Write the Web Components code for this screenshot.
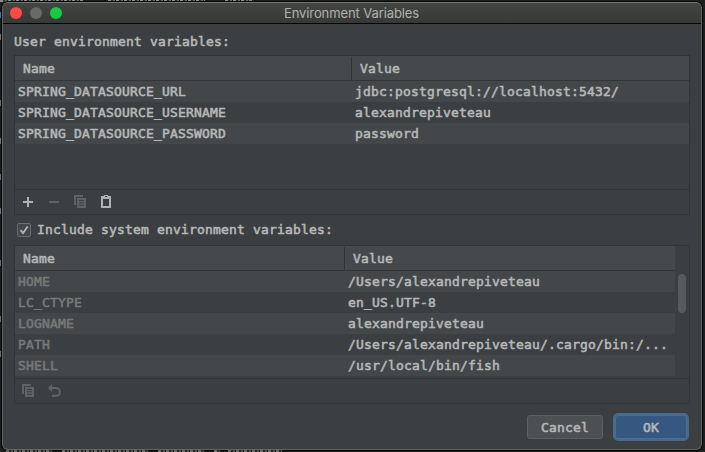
<!DOCTYPE html>
<html lang="en"><head><meta charset="utf-8"><title>Environment Variables</title>
<style>html,body{margin:0;height:100%;overflow:hidden;background:#232524}</style></head>
<body><env-dialog></env-dialog>
<script>
const define=(name,html,setup)=>customElements.define(name,class extends HTMLElement{
  connectedCallback(){
    if(this.shadowRoot)return;
    const t=document.createElement('template');
    t.innerHTML='<style>*{box-sizing:border-box}</style>'+html;
    this.attachShadow({mode:'open'}).append(t.content.cloneNode(true));
    if(setup)setup(this,this.shadowRoot);
  }
});

define('tool-icon',`<style>:host{display:block;width:16px;height:16px;color:#afb1b3}:host([off]){color:#606263}svg{display:block}</style><svg width="16" height="16" viewBox="0 0 16 16"></svg>`,(el,root)=>{
  const shapes={
    add:'<path fill="currentColor" d="M7 3h2v4h4v2H9v4H7V9H3V7h4z"/>',
    remove:'<path fill="currentColor" d="M3 7h10v2H3z"/>',
    copy:'<path fill="currentColor" d="M2 1h9v2H4v8H2z"/><path fill="currentColor" fill-rule="evenodd" d="M5 4h9v10H5zM7 6v.9h5V6zM7 8.3v.9h5v-.9zM7 10.8v.9h5v-.9z"/>',
    paste:'<path fill="currentColor" fill-rule="evenodd" d="M3 2h3V1h4v1h3v12H3zM5 5v7h6V5zM7 2v1h2V2z"/>',
    undo:'<path fill="currentColor" d="M2 5 6 1v8z"/><path fill="none" stroke="currentColor" stroke-width="2.1" d="M5 5h5a3.9 3.9 0 0 1 0 7.9H6"/>'
  };
  root.querySelector('svg').innerHTML=shapes[el.getAttribute('name')];
});

define('title-bar',`<style>
:host{display:grid;grid-template-columns:60px 1fr 60px;align-items:center;height:21px;flex:none;box-sizing:border-box;border-bottom:1px solid #050505;background:linear-gradient(#434542,#373936);font:13px Inter,sans-serif;color:#b0b1b0}
.lights{display:flex;gap:8px;padding-left:7px}i{width:12px;height:12px;border-radius:50%}
.title{text-align:center;letter-spacing:-.1px;line-height:20px;padding-right:1px}
</style><div class="lights"><i style="background:#ff4b48"></i><i style="background:#686969"></i><i style="background:#18c943"></i></div><div class="title"><slot></slot></div>`);

define('env-row',`<style>
:host{display:grid;grid-template-columns:var(--col) 1fr;height:21px;line-height:21px;flex:none}
:host(:nth-child(odd)){background:#434749}
div{padding-left:3px;white-space:pre}.k{color:var(--key,inherit)}
</style><div class="k"><slot name="key"></slot></div><div class="v"><slot></slot></div>`);

define('env-table',`<style>
:host{display:flex;flex-direction:column;box-sizing:border-box;border:1px solid #323435;flex:none}
.main{display:flex;flex:1;min-height:0}.grid{flex:1;display:flex;flex-direction:column}
.head{display:grid;grid-template-columns:var(--col) 1fr;height:25px;background:#45494b;border-bottom:1px solid #323435;line-height:26px;flex:none}
.head div{padding-left:8px}.head .v{position:relative}
.head .v::before{content:"";position:absolute;left:-1px;top:1px;bottom:2px;width:1px;background:#323435}
.bar{display:none;width:14px;padding:27px 0 0 2px}:host([scroll]) .bar{display:block}
.thumb{width:10px;height:41px;border-radius:5px;background:#595a5b;border:1px solid #3b3d3e}
.tools{height:25px;border-top:1px solid #323435;display:flex;align-items:center;gap:10px;padding-left:5px;flex:none}
</style><div class="main"><div class="grid"><div class="head"><div>Name</div><div class="v">Value</div></div><slot></slot></div><div class="bar"><div class="thumb"></div></div></div><div class="tools"><slot name="tools"></slot></div>`);

define('check-box',`<style>
:host{display:flex;align-items:center;gap:6px;height:14px;line-height:14px}
.b{width:14px;height:14px;border:1px solid #6b6d6e;border-radius:2px;background:#43494a}svg{display:block}
</style><span class="b"><svg width="12" height="12" viewBox="0 0 12 12"><path d="M2.5 6.2 5 9 9.7 2.5" fill="none" stroke="#b4b6b7" stroke-width="1.8"/></svg></span><span><slot></slot></span>`);

define('push-button',`<style>
:host{display:block;width:76px;height:24px;border:1px solid #5e6060;border-radius:3px;background:#4c5052;text-align:center;line-height:23px;box-sizing:border-box}
:host([primary]){height:28px;border:2px solid #43698f;border-radius:5px;background:#365880;box-shadow:inset 0 0 0 1px #4c708c;line-height:25px}
</style><slot></slot>`);

/* slivers of the editor's text lines that show around the dialog */
define('editor-sliver',`<style>
:host{display:flex;overflow:hidden}
:host([side]){flex-direction:column}
i{flex:none;width:var(--w);height:2px;margin-left:var(--gap);background:repeating-linear-gradient(90deg,#8a8c8a 0 3px,#2c2e2d 3px 5px,#686a68 5px 7px,#1d1f1f 7px 8px)}
:host([dim]) i{opacity:.7}
:host([side]) i{width:1px;height:6px;margin:var(--gap) 0 0;background:var(--c,#6e706f)}
</style>`,(el,root)=>{
  for(const part of el.getAttribute('runs').split(' ')){
    const [gap,w,c]=part.split(',');
    const i=document.createElement('i');
    i.style.setProperty('--gap',gap+'px');
    i.style.setProperty('--w',w+'px');
    if(c)i.style.setProperty('--c',c);
    root.append(i);
  }
});

define('env-dialog',`<style>
:host{display:grid;grid-template:2px 1fr 2px / 2px 1fr 3px;width:705px;height:452px;background:#1d1f1f;--mono:"DejaVu Sans Mono","Liberation Mono",monospace}
.top,.bottom{grid-column:1/-1}
.window{border-radius:6px;border:1px solid #626464;border-top-color:#747671;box-shadow:0 0 0 1px #050606;background:#3c3f41;display:flex;flex-direction:column;font:13px var(--mono);letter-spacing:.174px;-webkit-text-stroke:.55px currentColor;color:#b6b8b8;overflow:hidden}
title-bar{-webkit-text-stroke:0}
.body{padding:0 11px;display:flex;flex-direction:column;flex:1}
.label{height:31px;line-height:35px;flex:none}
.a{--col:337px;height:160px}.b{--col:330px;height:159px;--key:#777979}
check-box{margin:8px 0 8px 3px}
.buttons{display:flex;justify-content:flex-end;align-items:center;gap:10px;margin:9px 1px 0 0}
</style>
<editor-sliver class="top" runs="0,83 25,97 20,27"></editor-sliver>
<editor-sliver side runs="10,1,#3f78b5 16,1 60,1 32,1 30,1 28,1 46,1 50,1 29,1"></editor-sliver>
<div class="window"><title-bar>Environment Variables</title-bar><div class="body">
<div class="label">User environment variables:</div>
<env-table class="a">
<env-row><span slot="key">SPRING_DATASOURCE_URL</span>jdbc:postgresql://localhost:5432/</env-row>
<env-row><span slot="key">SPRING_DATASOURCE_USERNAME</span>alexandrepiveteau</env-row>
<env-row><span slot="key">SPRING_DATASOURCE_PASSWORD</span>password</env-row>
<tool-icon slot="tools" name="add"></tool-icon><tool-icon slot="tools" name="remove" off></tool-icon><tool-icon slot="tools" name="copy" off></tool-icon><tool-icon slot="tools" name="paste"></tool-icon>
</env-table>
<check-box>Include system environment variables:</check-box>
<env-table class="b" scroll>
<env-row><span slot="key">HOME</span>/Users/alexandrepiveteau</env-row>
<env-row><span slot="key">LC_CTYPE</span>en_US.UTF-8</env-row>
<env-row><span slot="key">LOGNAME</span>alexandrepiveteau</env-row>
<env-row><span slot="key">PATH</span>/Users/alexandrepiveteau/.cargo/bin:/...</env-row>
<env-row><span slot="key">SHELL</span>/usr/local/bin/fish</env-row>
<tool-icon slot="tools" name="copy" off></tool-icon><tool-icon slot="tools" name="undo" off></tool-icon>
</env-table>
<div class="buttons"><push-button>Cancel</push-button><push-button primary>OK</push-button></div>
</div></div><div></div>
<editor-sliver class="bottom" dim runs="6,46 10,86 10,46 10,6 8,54"></editor-sliver>`);
</script></body></html>
